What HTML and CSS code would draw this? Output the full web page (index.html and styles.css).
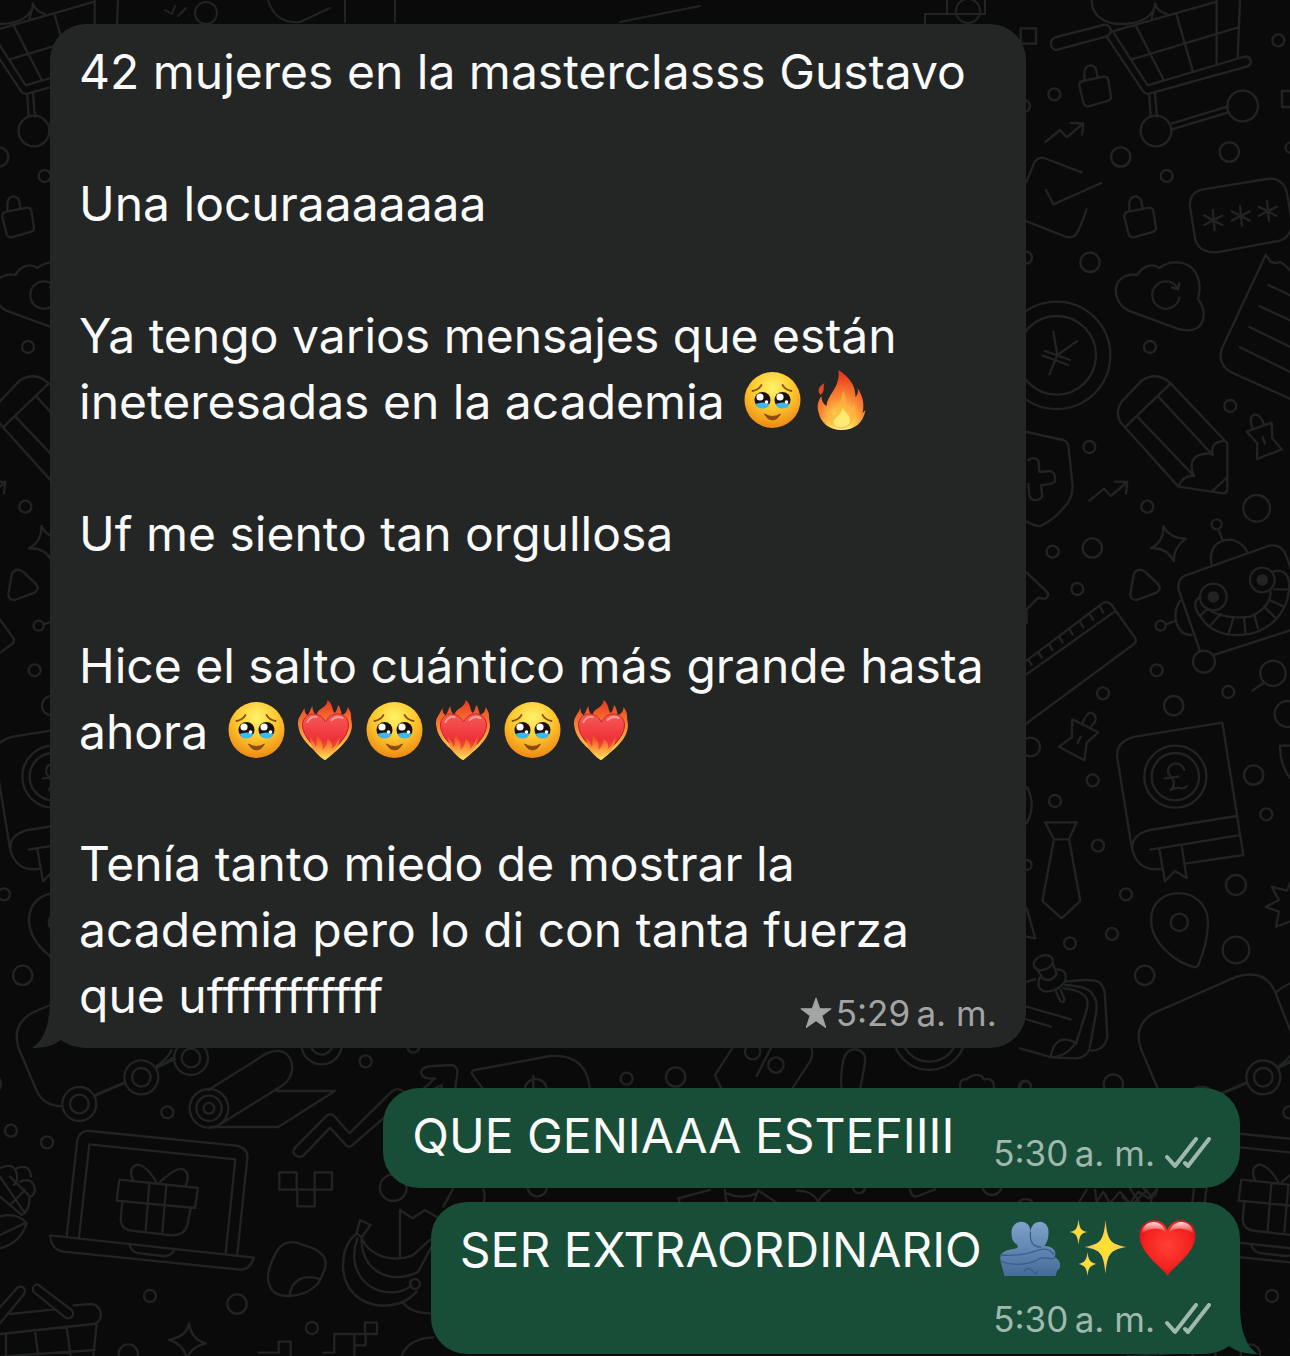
FILE: index.html
```html
<!DOCTYPE html>
<html lang="es">
<head>
    <meta charset="UTF-8">
    <meta name="viewport" content="width=device-width, initial-scale=1.0">
    <title>Chat</title>
    <link rel="stylesheet" href="styles.css">
</head>
<body>
    <!-- iconos reutilizables -->
    <svg class="sprite" aria-hidden="true">
        <defs>
            <radialGradient id="faceFill" cx="50%" cy="28%" r="72%">
                <stop offset="0" stop-color="#fff36a"/>
                <stop offset=".5" stop-color="#fdc92f"/>
                <stop offset="1" stop-color="#ee8914"/>
            </radialGradient>
            <radialGradient id="fireFill" cx="50%" cy="92%" r="85%">
                <stop offset="0" stop-color="#fffbc0"/>
                <stop offset=".25" stop-color="#ffd850"/>
                <stop offset=".55" stop-color="#fb8a35"/>
                <stop offset="1" stop-color="#e83a1f"/>
            </radialGradient>
            <linearGradient id="flameTip" x1="0" y1="0" x2="0" y2="1">
                <stop offset="0" stop-color="#e8351f"/>
                <stop offset=".5" stop-color="#fb9037"/>
                <stop offset="1" stop-color="#ffe45a"/>
            </linearGradient>
            <linearGradient id="hotHeart" x1="0" y1="0" x2="0" y2="1">
                <stop offset="0" stop-color="#f65b58"/>
                <stop offset=".6" stop-color="#ee3038"/>
                <stop offset="1" stop-color="#f77b2c"/>
            </linearGradient>
            <radialGradient id="heartFill" cx="50%" cy="45%" r="60%">
                <stop offset="0" stop-color="#ff4034"/>
                <stop offset=".7" stop-color="#f4211f"/>
                <stop offset="1" stop-color="#cf0d15"/>
            </radialGradient>
            <linearGradient id="shine" x1="0" y1="0" x2="0" y2="1">
                <stop offset="0" stop-color="#fff" stop-opacity=".85"/>
                <stop offset="1" stop-color="#fff" stop-opacity="0"/>
            </linearGradient>
            <linearGradient id="hugFill" x1="0" y1="0" x2="0" y2="1">
                <stop offset="0" stop-color="#7fa3c9"/>
                <stop offset="1" stop-color="#456b99"/>
            </linearGradient>
            <radialGradient id="sparkFill">
                <stop offset="0" stop-color="#ffe32e"/>
                <stop offset=".5" stop-color="#fdd648"/>
                <stop offset="1" stop-color="#f6b45c"/>
            </radialGradient>
        </defs>

        <symbol id="face" viewBox="0 0 60 60">
            <circle cx="30" cy="30" r="28" fill="url(#faceFill)"/>
            <g fill="none" stroke="#875014" stroke-width="1.8" stroke-linecap="round">
                <path d="M10 21Q16 20 19 15"/>
                <path d="M40 15Q43 20 49 21"/>
            </g>
            <circle cx="20" cy="30" r="8" fill="#18110f"/>
            <circle cx="40" cy="30" r="8" fill="#18110f"/>
            <path d="M13 34Q20 31 27 34Q25 38.500 20 38.500T13 34Z" fill="#3db8ef"/>
            <path d="M33 34Q40 31 47 34Q45 38.500 40 38.500T33 34Z" fill="#3db8ef"/>
            <g fill="#fff">
                <circle cx="17.500" cy="27" r="3.600"/>
                <circle cx="37.500" cy="27" r="3.600"/>
                <circle cx="24" cy="32" r="1.800"/>
                <circle cx="44" cy="32" r="1.800"/>
            </g>
            <path d="M22 44Q30 49 38 44Q35 50 30 50T22 44Z" fill="#8a4a10" stroke="#8a4a10" stroke-width="1" stroke-linejoin="round"/>
        </symbol>

        <symbol id="fire" viewBox="0 0 60 60">
            <path d="M27 0C39 8 44 16 44 27C46 25 47 22 46 18C52 27 53 35 51 43C52 42 53 41 54 40C52 53 43 60 30 60C18 60 9 53 7 42C5 35 7 30 10 26C10 31 12 34 15 36C16 24 29 18 27 0Z" fill="url(#fireFill)"/>
            <path d="M13 13C11 18 14 21 9 25C5 20 8 16 13 13Z" fill="#e8461f"/>
            <path d="M31 20C37 28 33 34 38 40C41 38 42 35 42 32C46 42 43 57 30 59C18 57 14 48 18 40C20 44 22 45 24 45C23 36 32 31 31 20Z" fill="#ffb03c" opacity=".65"/>
            <path d="M31 38C34 43 40 46 38 53C36 58 24 59 22 53C21 48 30 46 31 38Z" fill="#fff47c" opacity=".8"/>
        </symbol>

        <symbol id="heart-fire" viewBox="0 0 60 60">
            <path d="M30 60C22 52 5 42 3 27C1 19 5 16 9 8C9 12 10 14 12 15C15 12 14 10 17 6C17 11 19 14 21 15C22 8 32 8 32 0C38 5 36 9 39 13C42 11 41 8 43 5C45 9 46 12 46 15C50 14 52 11 52 7C57 13 55 17 56 21C59 36 46 47 30 60Z" fill="url(#flameTip)"/>
            <path d="M30 57C20 48 7 37 7 25C7 13 23 9 30 22C37 9 53 13 53 25C53 37 40 48 30 57Z" fill="url(#hotHeart)" stroke="#c91f2b" stroke-width="1"/>
            <path d="M29 60C19 53 15 47 14 35C17 41 19 42 20 47C23 43 19 39 22 34C24 39 28 41 27 50C31 46 32 43 32 38C36 43 38 45 36 49C41 46 41 41 44 36C45 46 38 54 29 60Z" fill="url(#flameTip)"/>
            <path d="M12 22Q15 16 21 17M36 20Q41 15 47 18" fill="none" stroke="#ff9b90" stroke-width="2" stroke-linecap="round"/>
        </symbol>

        <symbol id="hug" viewBox="0 0 60 60">
            <path d="M12 15C12 0 32 0 31 15C31 0 50 0 49 15C49 23 46 26 45 28C53 28 58 33 55 39C61 42 63 50 58 52L56 58H5L1 43C-1 32 10 32 18 30V27C13 24 12 20 12 15Z" fill="url(#hugFill)"/>
            <path d="M31 14C30 23 33 29 41 29M1 37C14 38 29 36 39 32C46 30 50 31 54 36M1 43C15 49 33 46 41 40C48 39 52 42 55 40M25 53Q29 48 33 53T38 53" fill="none" stroke="#36608f" stroke-width="1.300" stroke-linecap="round"/>
        </symbol>

        <symbol id="sparkles" viewBox="0 0 60 60">
            <g fill="url(#sparkFill)">
                <path d="M37 2C39 22 41 26 58 29C41 32 39 36 37 56C35 36 33 32 16 29C33 26 35 22 37 2Z"/>
                <path d="M10 1C11 10 12 13 19 14C12 15 11 18 10 27C9 18 8 15 1 14C8 13 9 10 10 1Z"/>
                <path d="M19 34C20 42 21 44 28 46C21 48 20 50 19 58C18 50 17 48 10 46C17 44 18 42 19 34Z"/>
            </g>
        </symbol>

        <symbol id="heart" viewBox="0 0 60 60">
            <path d="M30 58C25 49 2 36 2 17C2 0 25 -3 30 12C35 -3 58 0 58 17C58 36 35 49 30 58Z" fill="url(#heartFill)"/>
            <path d="M4 16C5 1 25 0 28 14C21 8 11 10 4 16Z" fill="url(#shine)"/>
            <path d="M32 14C35 0 55 1 56 16C49 10 39 8 32 14Z" fill="url(#shine)"/>
        </symbol>

        <symbol id="checks" viewBox="0 0 46 32">
            <path d="M2 20L10 29L31 2M20 26L23 29L44 2" fill="none" stroke="currentColor" stroke-width="4" stroke-linecap="round" stroke-linejoin="round"/>
        </symbol>

        <symbol id="tail" viewBox="0 0 60 50">
            <path d="M18 0C18 24 13 42 0 50C12 50 21 48 29 42C37 48 46 50 60 50V0Z" fill="currentColor"/>
        </symbol>
    </svg>

    <!-- fondo con dibujos -->
    <svg class="wallpaper" width="1290" height="1356" viewBox="0 0 1290 1356" aria-hidden="true">
        <defs>
            <path id="lock" d="M188 243L252 230Q262 229 265 240L273 290Q274 300 264 303L205 319Q195 320 191 310L178 258Q177 245 188 243ZM193 240V215Q196 196 213 196Q230 200 230 218L233 232"/>
            <path id="trend" d="M76 426L120 390L140 412L190 370M153 369L190 370L186 404"/>
            <path id="asterisk" d="M-2 -30L4 30M-27 -13L27 15M-27 15L27 -13"/>
            <g id="doodlesTop">
                <g transform="translate(1020 0) scale(.3333)">
                    <!-- carrito -->
                    <path d="M215 0C215 45 250 72 300 72C360 72 405 50 405 10C410 30 425 38 440 42M405 15L395 55"/>
                    <path d="M110 150L258 110Q276 102 272 88Q266 72 250 75L105 112Q90 120 93 135Q98 150 110 150Z"/>
                    <path d="M275 95L590 5M260 110L370 275Q376 284 388 281L680 200Q695 195 692 180Q685 166 670 171L383 256L282 100"/>
                    <path d="M348 78L430 238M470 45L518 212M590 0V190M660 0L653 172M335 178L655 82M388 284L392 350M405 280L411 350M456 370L622 320M456 388L625 337"/>
                    <circle cx="408" cy="393" r="46"/>
                    <circle cx="668" cy="318" r="46"/>
                    <circle cx="103" cy="283" r="18"/>
                    <circle cx="302" cy="471" r="29"/>
                    <circle cx="628" cy="456" r="29"/>
                    <circle cx="440" cy="528" r="18"/>
                    <circle cx="775" cy="121" r="18"/>
                    <circle cx="210" cy="787" r="29"/>
                    <circle cx="12" cy="318" r="18"/>
                    <circle cx="18" cy="773" r="18"/>
                    <circle cx="812" cy="443" r="15"/>
                    <rect x="2" y="85" width="46" height="46"/>
                    <rect x="786" y="273" width="48" height="48"/>
                    <use href="#lock"/>
                    <use href="#lock" x="135" y="393"/>
                    <use href="#trend"/>
                    <path d="M20 545L42 490Q52 470 72 474L185 517M20 664L140 711Q160 716 170 700Q180 685 200 628M78 570L100 613L244 549"/>
                    <path d="M550 568L740 537Q785 530 800 575L815 660Q820 705 780 722L590 757Q540 760 526 720L510 620Q508 575 550 568Z"/>
                    <use href="#asterisk" x="580" y="660"/>
                    <use href="#asterisk" x="662" y="647"/>
                    <use href="#asterisk" x="743" y="633"/>
                    <!-- nube -->
                    <path d="M352 825C370 795 400 790 418 804C450 780 500 780 525 815C545 845 540 875 534 898C560 930 555 970 530 985C510 995 490 992 470 985L325 932C295 915 282 885 290 855C300 830 325 820 352 825Z"/>
                    <path d="M478 893A41 41 0 1 1 470 860M478 850L474 868L456 862"/>
                    <!-- recibo -->
                    <path d="M830 1205L640 1120C605 1105 595 1075 606 1045L737 765Q745 775 752 785Q765 792 780 786Q795 792 810 812L850 830M745 855L830 895M718 918L830 970M688 981L830 1050M660 1042L830 1125"/>
                </g>
                <g transform="translate(1020 340) scale(.3333)">
                    <circle cx="110" cy="46" r="161"/>
                    <circle cx="110" cy="46" r="118"/>
                    <path d="M100 -25L112 45L172 3M112 45L88 103M75 33L150 60M68 47L145 75"/>
                    <circle cx="390" cy="21" r="18"/>
                    <circle cx="631" cy="198" r="18"/>
                    <circle cx="208" cy="321" r="18"/>
                    <circle cx="382" cy="500" r="18"/>
                    <circle cx="217" cy="624" r="29"/>
                    <circle cx="98" cy="635" r="18"/>
                    <circle cx="172" cy="747" r="18"/>
                    <circle cx="710" cy="505" r="40"/>
                    <circle cx="410" cy="991" r="18"/>
                    <!-- lapiz -->
                    <path d="M315 262L475 440L610 460Q622 460 622 445V310L452 130Q410 92 365 122L305 185Q285 215 300 245ZM315 262L452 130M352 230L522 408M415 170L578 345M475 440Q490 405 522 408Q500 355 545 343Q565 338 578 345Q570 305 612 303M575 455L618 415"/>
                    <path d="M680 275L755 248L757 295L785 328L711 357L712 310ZM697 262Q685 232 703 224Q722 222 732 254M728 292L735 311"/>
                    <!-- escudo -->
                    <path d="M20 276L130 300Q145 305 146 325L158 440Q158 475 130 505Q100 540 62 558Q50 560 20 545M25 360Q45 348 55 362L58 396L92 393Q108 400 105 425Q100 432 63 436L67 468Q60 482 42 480Q30 478 28 465L25 432"/>
                    <use href="#trend" x="132" y="56"/>
                    <path d="M430 558Q448 595 498 596Q462 620 461 663Q440 622 393 625Q432 605 430 558Z"/>
                    <path d="M342 700Q355 682 375 695L415 733Q425 748 410 758L350 780Q330 780 331 762Z"/>
                    <!-- robot -->
                    <circle cx="590" cy="553" r="15"/>
                    <path d="M596 570L608 600M575 672C565 630 590 600 627 599C655 600 675 620 682 636M540 933L476 750Q470 720 495 707L745 618Q785 608 800 650L830 740M582 945L830 865M480 783C455 820 465 885 515 885M438 853L466 843"/>
                    <circle cx="552" cy="965" r="33"/>
                    <circle cx="422" cy="857" r="15"/>
                    <circle cx="580" cy="771" r="40"/>
                    <circle cx="727" cy="720" r="37"/>
                    <circle class="solid" cx="580" cy="771" r="14"/>
                    <circle class="solid" cx="727" cy="720" r="14"/>
                    <path d="M542 770C515 785 525 810 545 835C580 885 640 890 690 882C760 865 805 810 808 740C808 700 785 685 760 695M562 806C600 835 650 835 690 830C730 815 752 785 752 755M562 806L540 828M602 822L570 858M640 835L626 880M672 834L677 880M703 825L714 865M732 800L768 835M748 780L792 800M762 748L806 748"/>
                    <path d="M20 698L80 755Q90 765 78 775Q65 778 55 773L20 808V850"/>
                    <!-- regla -->
                    <path d="M20 962L250 788Q265 783 275 795L345 893Q352 903 342 912L20 1150M20 1003L288 812M240 800L250 818M210 825L220 840M180 846L190 862M148 868L158 884M118 891L128 907M87 914L97 930M55 937L65 953M25 960L35 975"/>
                    <circle cx="759" cy="1000" r="38"/>
                    <path d="M730 1030L697 1052"/>
                </g>
                <g transform="translate(1020 680) scale(.3333)">
                    <circle cx="249" cy="40" r="18"/>
                    <circle cx="625" cy="36" r="18"/>
                    <circle cx="461" cy="77" r="29"/>
                    <circle cx="32" cy="201" r="28"/>
                    <circle cx="218" cy="301" r="18"/>
                    <circle cx="105" cy="363" r="18"/>
                    <circle cx="701" cy="285" r="29"/>
                    <circle cx="739" cy="403" r="18"/>
                    <circle cx="234" cy="497" r="18"/>
                    <circle cx="20" cy="555" r="15"/>
                    <circle cx="318" cy="643" r="18"/>
                    <circle cx="648" cy="615" r="30"/>
                    <circle cx="648" cy="810" r="40"/>
                    <circle cx="276" cy="762" r="18"/>
                    <circle cx="150" cy="790" r="18"/>
                    <circle cx="374" cy="886" r="29"/>
                    <circle cx="280" cy="1212" r="29"/>
                    <circle cx="17" cy="1220" r="16"/>
                    <circle cx="803" cy="102" r="39"/>
                    <path d="M157 118L235 157L200 188L193 241L117 200L155 172ZM187 131Q200 95 215 98Q232 108 225 125L212 142M182 170L173 189M20 320Q50 375 20 430"/>
                    <!-- libro -->
                    <path d="M500 550L670 525L607 128L345 170Q285 185 292 235L335 500C345 550 375 575 425 566M650 408L390 450Q330 465 338 515M655 466L392 509M418 507L435 604L465 573L500 594L485 497"/>
                    <circle cx="466" cy="290" r="93"/>
                    <circle cx="466" cy="290" r="71"/>
                    <path d="M493 270Q485 250 465 250Q440 256 445 280Q462 300 462 310Q462 322 452 330Q475 320 485 326Q495 325 500 318M434 296L475 290"/>
                    <!-- corbata -->
                    <path d="M75 427H170L147 478H102ZM102 478L67 663L125 715L181 663L147 478"/>
                    <path d="M525 862C470 850 393 790 393 720C393 612 560 612 564 725C564 780 550 820 535 855Q530 862 525 862Z"/>
                    <circle cx="478" cy="727" r="26"/>
                    <path d="M830 640L815 600L800 632L755 620L777 660L737 681L777 695L768 740L810 725M830 197H780C780 240 790 275 820 305M20 685L46 775L20 770"/>
                    <!-- notas con chincheta -->
                    <path d="M20 905L45 898M140 905Q210 895 235 905Q255 920 255 950L262 1070Q255 1110 215 1112M135 915Q205 920 215 940Q235 960 228 1000L208 1110Q195 1135 165 1135L95 1132M130 925Q185 930 200 955Q205 970 200 990L170 1085Q140 1130 95 1132L0 1105M92 1130Q100 1080 135 1078Q155 1080 170 1090M20 980L152 1018M20 1018L92 1040"/>
                    <ellipse cx="70" cy="848" rx="30" ry="21" transform="rotate(-20 70 848)"/>
                    <path d="M50 865L68 895Q90 910 110 882L98 850M60 892Q45 925 75 935Q115 935 135 905Q145 870 112 868M108 935L122 965Q130 970 134 960L122 930"/>
                    <!-- pantalla -->
                    <path d="M415 1230L362 1105Q340 1035 400 1000L650 890Q735 865 765 935L830 1100M768 940Q775 925 830 902M775 1165L830 1130M680 1210L590 1248"/>
                    <circle cx="730" cy="1192" r="51"/>
                    <circle cx="730" cy="1192" r="28"/>
                </g>
            </g>
            <g id="doodlesBottom" transform="translate(0 1030) scale(.3333)">
                <path d="M109 180Q130 228 185 229M285 195L372 158M470 108Q500 90 515 60M470 112L525 88"/>
                <circle cx="238" cy="222" r="51"/>
                <circle cx="238" cy="222" r="28"/>
                <circle cx="573" cy="84" r="51"/>
                <circle cx="573" cy="84" r="28"/>
                <!-- rollo -->
                <path d="M625 180L800 70Q850 50 870 85Q890 130 850 165L665 280M830 183H1005L835 291H630"/>
                <circle cx="627" cy="235" r="58"/>
                <circle cx="627" cy="235" r="38"/>
                <circle cx="627" cy="235" r="16"/>
                <circle cx="965" cy="42" r="61"/>
                <circle cx="965" cy="42" r="32"/>
                <circle cx="502" cy="247" r="18"/>
                <circle cx="1097" cy="94" r="18"/>
                <circle cx="33" cy="302" r="18"/>
                <circle cx="141" cy="337" r="18"/>
                <circle cx="450" cy="798" r="18"/>
                <circle cx="711" cy="822" r="29"/>
                <circle cx="936" cy="894" r="18"/>
                <circle cx="385" cy="972" r="29"/>
                <circle cx="1180" cy="473" r="40"/>
                <path d="M1150 265L1058 345Q1048 355 1038 345L990 293L915 372Q900 390 882 372Q878 360 888 350L980 257Q990 248 1002 257L1048 310L1175 185Q1195 170 1210 185"/>
                <!-- portatil con regalo -->
                <path d="M200 618L232 330Q240 300 270 303L710 347Q745 355 742 385L712 672M237 622L268 343L706 388L677 670M150 616L762 683Q750 720 720 719L190 665Q155 660 150 616ZM388 645Q395 668 420 670L490 678Q515 678 523 660"/>
                <path d="M358 449L594 474L585 534L350 512ZM448 460L437 600M499 466L487 606M367 515L362 570Q365 600 395 602L515 616Q555 615 562 585L572 535M470 458Q440 405 410 404Q385 415 397 445L400 452M480 456Q530 410 550 418Q572 430 558 465"/>
                <path d="M838 427H890V479H944V427H996V479H944V529H892V479H838ZM890 479H944M836 968V935H872V978M775 968H836M970 968H1003V912H1095V878H1131V912H1097V946H1063V978M1063 912V946"/>
                <path d="M868 798Q810 800 805 750Q800 720 830 665Q850 630 890 638L940 655Q985 675 975 715Q960 755 950 765Q920 795 868 798C875 750 910 730 962 748"/>
                <!-- platanos -->
                <path d="M1070 610C1020 650 1015 740 1060 790C1110 840 1200 840 1250 785M1070 610L1080 570L1112 585L1085 622L1070 610ZM1072 625C1045 700 1080 770 1150 785C1190 792 1220 780 1235 765M1085 622C1080 720 1170 770 1255 725L1295 650M1085 625C1110 680 1180 700 1240 675L1290 630M1200 685V540L1238 565L1275 540L1310 560M1210 820Q1235 850 1290 850M1205 978Q1225 925 1300 922"/>
                <circle cx="1245" cy="762" r="15"/>
                <path d="M567 880Q575 930 618 940Q570 950 560 990Q555 945 507 930Q560 920 567 880Z"/>
                <!-- cesta -->
                <path d="M0 880L70 795Q80 782 70 772Q58 765 48 778L0 832M100 785Q95 765 113 763L215 840Q225 855 212 863Q205 868 195 862ZM30 852L165 838M220 826L275 822Q300 825 303 855Q300 880 280 882L0 912M18 912V978M105 902L115 978M200 892L212 978M290 882L280 978M0 980L285 960"/>
                <path d="M0 415Q40 395 50 430Q55 460 40 465M50 415Q90 400 93 440M60 455Q100 440 105 480Q100 500 90 500L30 440M88 505Q90 540 65 555L0 500M0 440L75 550M35 520L75 480M0 560Q50 545 80 580Q60 640 0 655M0 615L78 578"/>
            </g>
        </defs>
        <use href="#doodlesTop"/>
        <use href="#doodlesTop" x="-1122"/>
        <use href="#doodlesBottom"/>
        <use href="#doodlesBottom" x="1122"/>
        <g transform="translate(400 1030) scale(.3333)">
            <path d="M250 178L215 130Q215 122 225 120L450 78Q560 70 570 178M375 178A32 30 0 0 1 440 178M400 138V178M68 178L105 145Q65 150 63 125Q70 108 100 108L155 105Q175 110 172 130L165 178M100 178L125 165V178"/>
            <path d="M965 178L945 135L1000 50M1235 57Q1240 80 1230 95L1175 178M1115 50L1070 138"/>
            <circle cx="40" cy="50" r="18"/>
            <circle cx="680" cy="146" r="18"/>
            <circle cx="827" cy="141" r="29"/>
            <circle cx="1058" cy="65" r="23"/>
            <circle cx="1128" cy="105" r="23"/>
            <circle cx="412" cy="470" r="29"/>
            <path d="M130 530L160 475M250 478Q258 500 250 520M840 520L835 505L930 480M975 480Q975 510 985 522M1075 480L1060 520M1080 485L1130 518M980 490Q1025 510 1070 490M1190 482Q1235 480 1255 515Q1270 490 1290 480"/>
        </g>
        <g transform="translate(840 1040) scale(.3333)">
            <path d="M5 150Q0 110 10 60Q20 25 50 28Q80 35 75 70L60 150M362 150Q355 115 380 118Q400 100 425 108L430 118Q465 110 462 150"/>
            <circle cx="268" cy="-20" r="110"/>
            <circle cx="268" cy="-20" r="85"/>
            <circle cx="555" cy="140" r="18"/>
            <circle cx="57" cy="442" r="18"/>
            <circle cx="456" cy="436" r="29"/>
            <circle cx="557" cy="505" r="28"/>
            <path d="M210 448Q215 475 235 468L285 448M715 490L740 450M765 450L770 485L790 455L810 490L840 455L870 490L895 455L925 475L950 450"/>
        </g>
        <!-- franja superior -->
        <path d="M165 10L172 14L175 6M178 16L186 8M268 0Q275 24 300 22M300 22L330 8M345 0V22M395 0V22M925 24V14H947V0M947 14H985V0M620 22L700 6"/>
        <circle cx="206" cy="13" r="11"/>
        <circle cx="968" cy="11" r="12"/>
    </svg>

    <main class="chat">
        <article class="bubble received">
            <div class="text">
                <p>42 mujeres en la masterclasss Gustavo</p>
                <p>Una locuraaaaaaa</p>
                <p>Ya tengo varios mensajes que están ineteresadas en la academia <svg class="emoji" role="img" aria-label="🥹"><use href="#face"/></svg><svg class="emoji" role="img" aria-label="🔥"><use href="#fire"/></svg></p>
                <p>Uf me siento tan orgullosa</p>
                <p>Hice el salto cuántico más grande hasta ahora <svg class="emoji" role="img" aria-label="🥹"><use href="#face"/></svg><svg class="emoji" role="img" aria-label="❤️‍🔥"><use href="#heart-fire"/></svg><svg class="emoji" role="img" aria-label="🥹"><use href="#face"/></svg><svg class="emoji" role="img" aria-label="❤️‍🔥"><use href="#heart-fire"/></svg><svg class="emoji" role="img" aria-label="🥹"><use href="#face"/></svg><svg class="emoji" role="img" aria-label="❤️‍🔥"><use href="#heart-fire"/></svg></p>
                <p>Tenía tanto miedo de mostrar la academia pero lo di con tanta fuerza<br>que ufffffffffff</p>
            </div>
            <div class="meta">
                <svg class="star" viewBox="0 0 30 30" aria-label="Destacado"><path d="M15 1L18.500 11H29L20.500 17.500L24 28.500L15 22L6 28.500L9.500 17.500L1 11H11.500Z" fill="currentColor" stroke="currentColor" stroke-linejoin="round"/></svg>
                <time datetime="05:29">5:29&#8239;a.&nbsp;m.</time>
            </div>
            <svg class="tail" aria-hidden="true"><use href="#tail"/></svg>
        </article>

        <article class="bubble sent">
            <div class="text">
                <p>QUE GENIAAA ESTEFIIII</p>
            </div>
            <div class="meta">
                <time datetime="05:30">5:30&#8239;a.&nbsp;m.</time>
                <svg class="checks" aria-label="Leído"><use href="#checks"/></svg>
            </div>
        </article>

        <article class="bubble sent stacked">
            <div class="text">
                <p>SER EXTRAORDINARIO <svg class="emoji" role="img" aria-label="🫂"><use href="#hug"/></svg><svg class="emoji" role="img" aria-label="✨"><use href="#sparkles"/></svg><svg class="emoji" role="img" aria-label="❤️"><use href="#heart"/></svg></p>
            </div>
            <div class="meta">
                <time datetime="05:30">5:30&#8239;a.&nbsp;m.</time>
                <svg class="checks" aria-label="Leído"><use href="#checks"/></svg>
            </div>
            <svg class="tail" aria-hidden="true"><use href="#tail"/></svg>
        </article>
    </main>
</body>
</html>
```
FILE: styles.css
```css
* {
    box-sizing: border-box;
}

body {
    margin: 0;
    background-color: #0a0a0a;
    color: #fafafa;
    font-family: Inter, "Liberation Sans", sans-serif;
    font-size: 48px;
    line-height: 66px;
}

.sprite {
    position: absolute;
    width: 0;
    height: 0;
}

.wallpaper {
    position: absolute;
    top: 0;
    left: 0;
    max-width: 100%;
    fill: none;
    stroke: #222323;
    stroke-width: 2;
    stroke-linecap: round;
    stroke-linejoin: round;
}

.wallpaper g {
    stroke-width: 7;
}

.wallpaper .solid {
    fill: #222323;
}

.chat {
    position: relative;
    display: flex;
    flex-direction: column;
    min-height: 100vh;
    padding: 24px 50px 0;
    overflow: hidden;
}

/* el texto y la hora comparten la misma celda */
.bubble {
    position: relative;
    z-index: 0;
    display: grid;
    padding: 15px 29px;
    border-radius: 36px;
}

.received {
    align-self: flex-start;
    width: 82%;
    margin-bottom: 40px;
    background-color: #242626;
}

.sent {
    align-self: flex-end;
    width: 72%;
    margin-bottom: 14px;
    background-color: #184d38;
}

.text {
    grid-area: 1 / 1;
    padding-bottom: 4px;
}

.text p {
    margin: 0;
}

.text p + p {
    margin-top: 66px;
}

.meta {
    grid-area: 1 / 1;
    align-self: end;
    justify-self: end;
    display: flex;
    align-items: center;
    color: #a3a4a4;
    font-size: 35px;
    line-height: 40px;
}

.sent .meta {
    gap: 10px;
    color: #a0b9ae;
}

.stacked {
    width: 68%;
    row-gap: 12px;
    margin-bottom: 0;
}

.stacked .meta {
    grid-row: 2;
}

.emoji {
    width: 61px;
    height: 60px;
    margin: -10px 4px 2px;
    vertical-align: middle;
}

.star {
    width: 32px;
    height: 32px;
    margin-right: 4px;
}

.checks {
    width: 46px;
    height: 32px;
}

.tail {
    position: absolute;
    bottom: 0;
    left: -18px;
    z-index: -1;
    width: 60px;
    height: 50px;
    color: #242626;
}

.sent .tail {
    right: -18px;
    left: auto;
    color: #184d38;
    transform: scaleX(-1);
}
```
